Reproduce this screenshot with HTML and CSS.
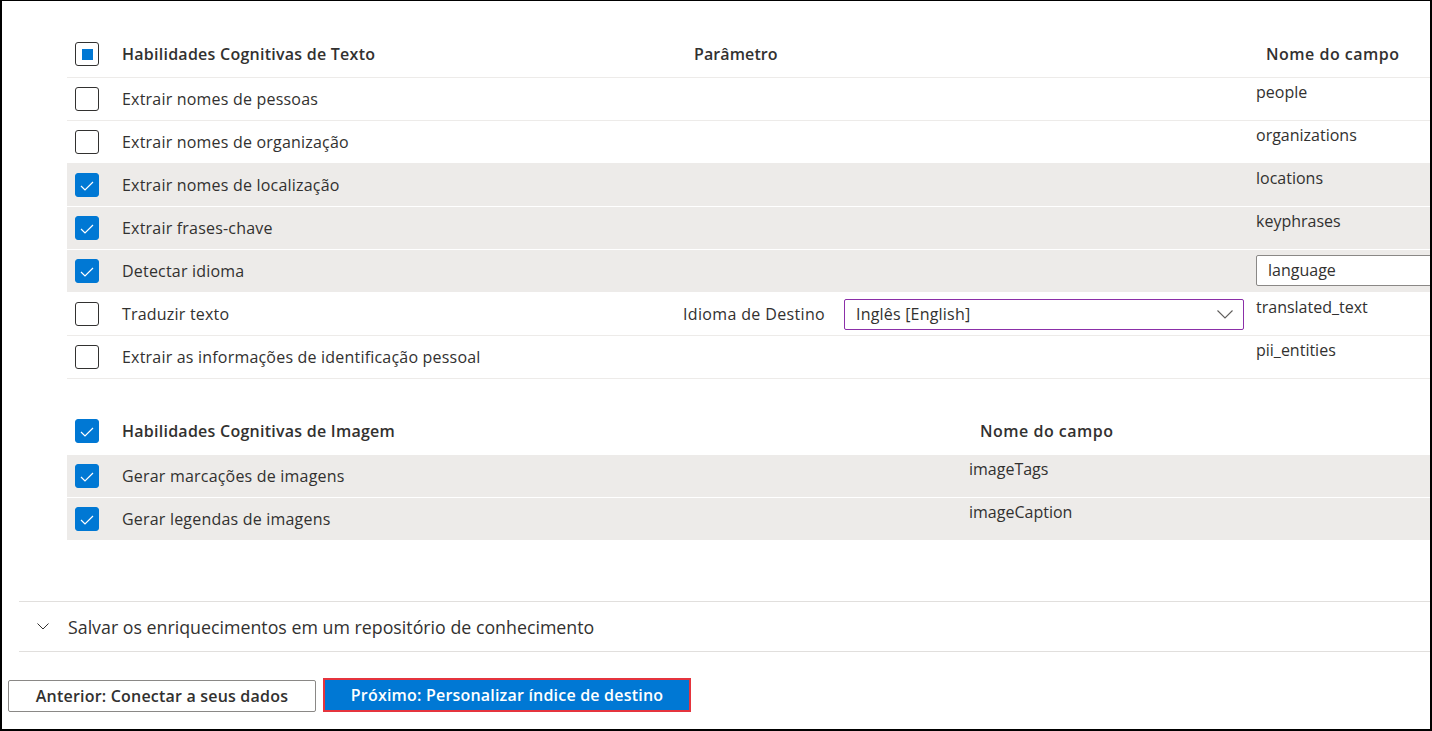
FILE: index.html
```html
<!DOCTYPE html>
<html lang="pt">
<head>
<meta charset="utf-8">
<title>Habilidades cognitivas</title>
<link rel="stylesheet" href="styles.css">
</head>
<body>
<div class="frame">
  <div class="content">
    <div class="table text-table">
      <div class="row head">
        <div class="cell-check"><span class="cb indet"></span></div>
        <div class="name">Habilidades Cognitivas de Texto</div>
        <div class="param-head">Parâmetro</div>
        <div class="field-head">Nome do campo</div>
      </div>
      <div class="row">
        <div class="cell-check"><span class="cb"></span></div>
        <div class="name">Extrair nomes de pessoas</div>
        <div class="param"></div>
        <div class="field">people</div>
      </div>
      <div class="row">
        <div class="cell-check"><span class="cb"></span></div>
        <div class="name">Extrair nomes de organização</div>
        <div class="param"></div>
        <div class="field">organizations</div>
      </div>
      <div class="row sel">
        <div class="cell-check"><span class="cb checked"><svg viewBox="0 0 24 24" width="24" height="24"><path d="M6 13 L10 17 L18 9" fill="none" stroke="#fff" stroke-width="1.2"/></svg></span></div>
        <div class="name">Extrair nomes de localização</div>
        <div class="param"></div>
        <div class="field">locations</div>
      </div>
      <div class="row sel">
        <div class="cell-check"><span class="cb checked"><svg viewBox="0 0 24 24" width="24" height="24"><path d="M6 13 L10 17 L18 9" fill="none" stroke="#fff" stroke-width="1.2"/></svg></span></div>
        <div class="name">Extrair frases-chave</div>
        <div class="param"></div>
        <div class="field">keyphrases</div>
      </div>
      <div class="row sel">
        <div class="cell-check"><span class="cb checked"><svg viewBox="0 0 24 24" width="24" height="24"><path d="M6 13 L10 17 L18 9" fill="none" stroke="#fff" stroke-width="1.2"/></svg></span></div>
        <div class="name">Detectar idioma</div>
        <div class="param"></div>
        <div class="field-input"><div class="input">language</div></div>
      </div>
      <div class="row">
        <div class="cell-check"><span class="cb"></span></div>
        <div class="name">Traduzir texto</div>
        <div class="param">
          <span class="param-label">Idioma de Destino</span>
          <div class="dropdown">
            <span>Inglês [English]</span>
            <svg class="chev" viewBox="0 0 16 9" width="16" height="9"><path d="M0.5 0.5 L8 8 L15.5 0.5" fill="none" stroke="#605e5c" stroke-width="1.1"/></svg>
          </div>
        </div>
        <div class="field">translated_text</div>
      </div>
      <div class="row">
        <div class="cell-check"><span class="cb"></span></div>
        <div class="name">Extrair as informações de identificação pessoal</div>
        <div class="param"></div>
        <div class="field">pii_entities</div>
      </div>
    </div>

    <div class="table image-table">
      <div class="row head">
        <div class="cell-check"><span class="cb checked"><svg viewBox="0 0 24 24" width="24" height="24"><path d="M6 13 L10 17 L18 9" fill="none" stroke="#fff" stroke-width="1.2"/></svg></span></div>
        <div class="name">Habilidades Cognitivas de Imagem</div>
        <div class="field-head">Nome do campo</div>
      </div>
      <div class="row sel">
        <div class="cell-check"><span class="cb checked"><svg viewBox="0 0 24 24" width="24" height="24"><path d="M6 13 L10 17 L18 9" fill="none" stroke="#fff" stroke-width="1.2"/></svg></span></div>
        <div class="name">Gerar marcações de imagens</div>
        <div class="field">imageTags</div>
      </div>
      <div class="row sel">
        <div class="cell-check"><span class="cb checked"><svg viewBox="0 0 24 24" width="24" height="24"><path d="M6 13 L10 17 L18 9" fill="none" stroke="#fff" stroke-width="1.2"/></svg></span></div>
        <div class="name">Gerar legendas de imagens</div>
        <div class="field">imageCaption</div>
      </div>
    </div>
  </div>

  <div class="expander">
    <svg class="exp-chev" viewBox="0 0 12 7" width="12" height="7"><path d="M0.5 0.5 L6 6 L11.5 0.5" fill="none" stroke="#323130" stroke-width="1"/></svg>
    <span>Salvar os enriquecimentos em um repositório de conhecimento</span>
  </div>

  <div class="footer">
    <button class="btn btn-default">Anterior: Conectar a seus dados</button>
    <div class="highlight"><button class="btn btn-primary">Próximo: Personalizar índice de destino</button></div>
  </div>
</div>
</body>
</html>
```

FILE: styles.css
```css
* { box-sizing: border-box; }

body {
  margin: 0;
  font-family: "Open Sans", "Noto Sans", sans-serif;
  color: #323130;
  background: #fff;
}

.frame {
  width: 1432px;
  height: 731px;
  border: 2px solid #000;
  border-top-width: 1px;
  overflow: hidden;
  display: flex;
  flex-direction: column;
}

.content {
  padding: 30px 0 0 65px;
}

.table + .table {
  margin-top: 29px;
}

.row {
  display: grid;
  height: 43px;
  align-items: center;
  border-bottom: 1px solid #edebe9;
  font-size: 16px;
  line-height: 22px;
  letter-spacing: 0.2px;
  overflow: hidden;
}

.text-table .row {
  grid-template-columns: 55px 550px 584px minmax(0, 1fr);
}

.image-table .row {
  grid-template-columns: 55px 847px minmax(0, 1fr);
}

.row.head {
  height: 47px;
  font-weight: 600;
  letter-spacing: 0.25px;
}

.image-table .row.head {
  border-bottom-color: #fff;
}

.row.sel {
  background: #edebe9;
  border-bottom-color: #fff;
}

.cell-check {
  padding-left: 8px;
  display: flex;
  align-items: center;
}

.cb {
  width: 24px;
  height: 24px;
  border: 1px solid #323130;
  border-radius: 3px;
  display: flex;
  align-items: center;
  justify-content: center;
  background: #fff;
}

.cb.checked {
  background: #0078d4;
  border-color: #0078d4;
}

.cb.checked svg {
  display: block;
  flex: none;
}

.cb.indet::after {
  content: "";
  width: 11px;
  height: 11px;
  background: #0078d4;
}

.name {
  white-space: nowrap;
}

.param-head {
  padding-left: 22px;
  letter-spacing: 0.1px;
}

.field-head {
  padding-left: 10px;
  white-space: nowrap;
  letter-spacing: 0.5px;
}

.image-table .field-head {
  padding-left: 11px;
}

.field {
  align-self: start;
  padding-top: 3px;
  white-space: nowrap;
  letter-spacing: 0;
}

.field-input {
  align-self: start;
  padding-top: 5px;
  overflow: hidden;
  letter-spacing: 0;
}

.input {
  width: 220px;
  height: 31px;
  border: 1px solid #8a8886;
  border-radius: 2px;
  background: #fff;
  padding-left: 11px;
  line-height: 29px;
}

.param {
  display: flex;
  align-items: center;
  padding-left: 11px;
  height: 100%;
}

.param-label {
  width: 161px;
  white-space: nowrap;
  letter-spacing: 0.35px;
}

.dropdown {
  width: 400px;
  height: 31px;
  border: 1px solid #8b2fa8;
  border-radius: 2px;
  background: #fff;
  display: flex;
  align-items: center;
  justify-content: space-between;
  padding: 0 10px 0 11px;
}

.chev {
  display: block;
}

.expander {
  margin: 60px 0 0 17px;
  height: 51px;
  border-top: 1px solid #e1dfdd;
  border-bottom: 1px solid #e1dfdd;
  display: flex;
  align-items: center;
  padding-left: 18px;
  font-size: 17.8px;
  gap: 19px;
}

.exp-chev {
  display: block;
  flex: none;
}

.footer {
  display: flex;
  align-items: flex-end;
  gap: 7px;
  padding: 26px 0 0 6px;
}

.btn {
  font-family: "Open Sans", "Noto Sans", sans-serif;
  font-size: 16px;
  font-weight: 600;
  letter-spacing: 0.2px;
  border-radius: 2px;
  padding: 0;
  cursor: pointer;
  white-space: nowrap;
}

.btn-default {
  width: 308px;
  height: 32px;
  background: #fff;
  color: #323130;
  border: 1px solid #8a8886;
}

.highlight {
  width: 368px;
  height: 34px;
  border: 2px solid #e5343d;
  display: flex;
}

.btn-primary {
  flex: 1;
  background: #0078d4;
  color: #fff;
  border: 1px solid #0078d4;
  border-radius: 0;
}
```
